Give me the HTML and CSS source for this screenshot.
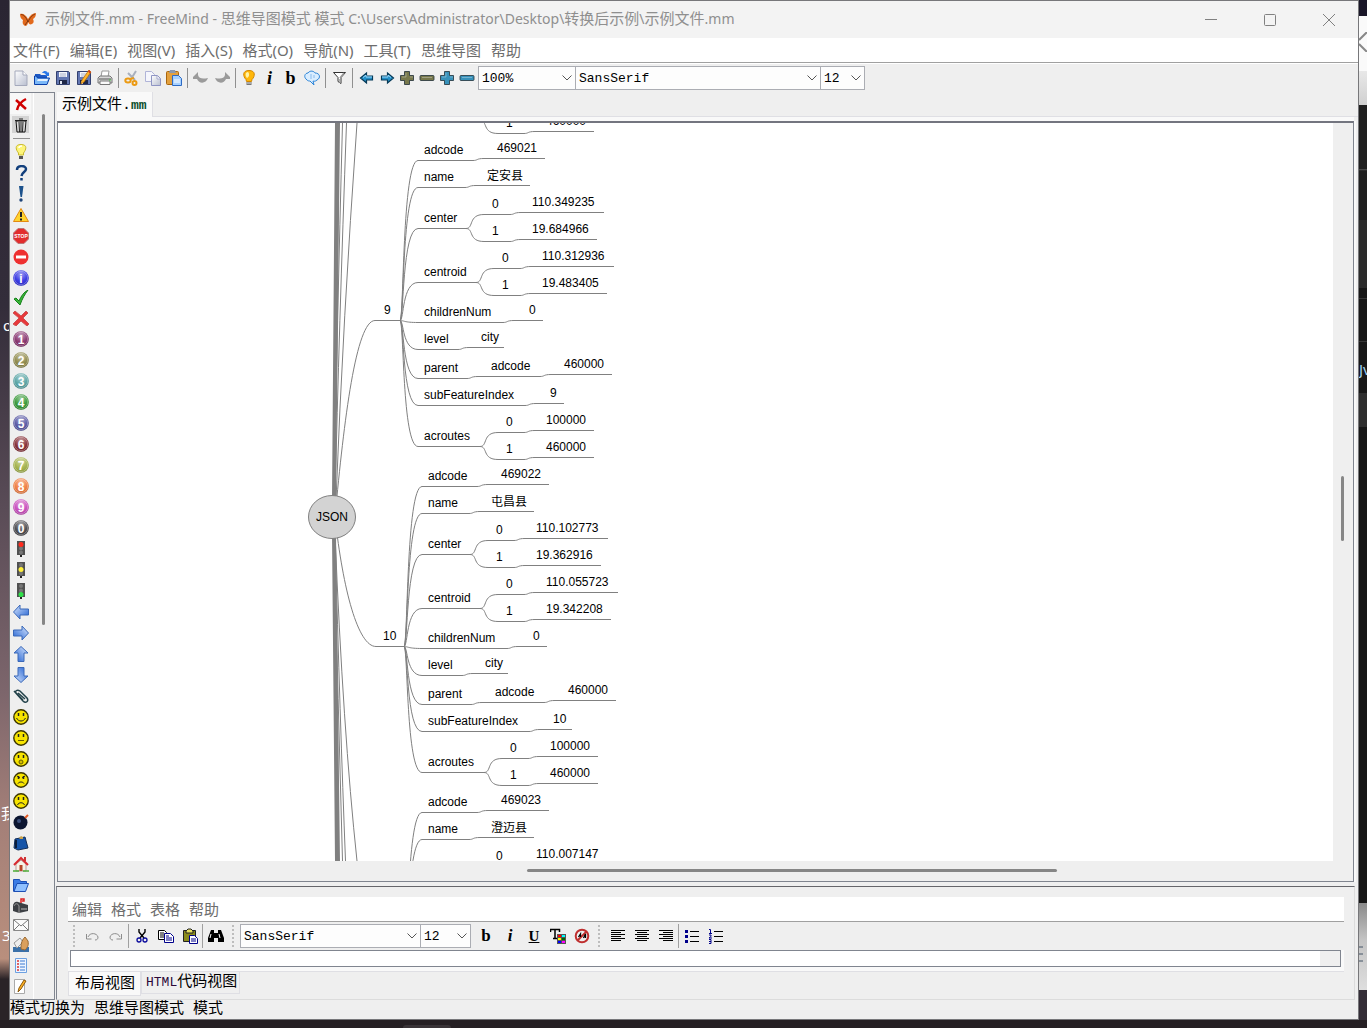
FILE: index.html
```html
<!DOCTYPE html>
<html lang="zh-CN">
<head>
<meta charset="utf-8">
<title>示例文件.mm - FreeMind</title>
<link rel="stylesheet" href="styles.css">
</head>
<body>
<svg class="defs" aria-hidden="true">
  <defs>
    <linearGradient id="gBlue" x1="0" y1="0" x2="1" y2="1"><stop offset="0" stop-color="#dbe9ff"/><stop offset="1" stop-color="#1f5fd0"/></linearGradient>
    <linearGradient id="gGrey" x1="0" y1="0" x2="1" y2="1"><stop offset="0" stop-color="#ffffff"/><stop offset="1" stop-color="#b9bfd0"/></linearGradient>
    <radialGradient id="gShine" cx=".5" cy=".25" r=".75"><stop offset="0" stop-color="#fff" stop-opacity=".55"/><stop offset=".6" stop-color="#fff" stop-opacity=".1"/><stop offset="1" stop-color="#000" stop-opacity=".2"/></radialGradient>
    <symbol id="i-page" viewBox="0 0 16 16"><path d="M2 1h8l4 4v10.500H2z" fill="url(#gGrey)" stroke="#a4a9bb"/><path d="M10 1v4h4" fill="#fff" stroke="#a4a9bb"/></symbol>
    <symbol id="i-open" viewBox="0 0 16 16"><path d="M1 4h5l1 1h6v3H1z" fill="#1c58c4"/><path d="M8 3c2-3 5-2 6 0l1-1v4h-4l1-1c-1-2-2-2-4-2z" fill="#2a79e8"/><path d="M.5 14.500V6h2l1 2h12l-2.500 6.500z" fill="#7bb8f8" stroke="#0a3fa8"/><path d="M4 9h10l-1 2H3z" fill="#e4f2ff"/></symbol>
    <symbol id="i-save" viewBox="0 0 16 16"><path d="M1.500 1.500h12l1 1v12h-13z" fill="#6377b2" stroke="#33406f"/><path d="M4 2h8v5H4z" fill="#f3f5fa"/><path d="M5 4h6M5 6h6" stroke="#aab2cc"/><path d="M4 10h8v4H4z" fill="#1e2747"/><path d="M5 11h2v3H5z" fill="#dfe4f0"/></symbol>
    <symbol id="i-saveas" viewBox="0 0 16 16"><use href="#i-save"/><path d="M13 0l2 2-7 10-3 2 1-4z" fill="#ffb52a" stroke="#b46a00" stroke-width=".7"/><path d="M13 0l2 2-1 1.500-2-2z" fill="#d43a1c"/></symbol>
    <symbol id="i-print" viewBox="0 0 16 16"><path d="M5 1h7l-1 6H4z" fill="#fff" stroke="#999"/><path d="M1 8l2-2h10l2 2v5H1z" fill="#d8d8d8" stroke="#777"/><path d="M3 11h10v3.500H3z" fill="#fafafa" stroke="#777"/><path d="M2 9h12" stroke="#555"/><circle cx="13" cy="10" r=".8" fill="#3c3"/></symbol>
    <symbol id="i-cut" viewBox="0 0 16 16"><path d="M12 1L7 9M4 3l7 7" stroke="#a9b0bd" stroke-width="2"/><g fill="none" stroke="#eb9a13" stroke-width="2"><ellipse cx="4" cy="10.500" rx="2.700" ry="2"/><ellipse cx="10.500" cy="13" rx="2" ry="2"/><path d="M6 9l4-1"/></g></symbol>
    <symbol id="i-copy" viewBox="0 0 16 16"><path d="M.5 1.500h6l3 3v7h-9z" fill="#f5f6fc" stroke="#b0b4d8"/><path d="M6.500 5.500h6l3 3v7h-9z" fill="url(#gGrey)" stroke="#8f95c4"/><path d="M12 6v3h3" fill="#fff" stroke="#a5aacf"/></symbol>
    <symbol id="i-paste" viewBox="0 0 16 16"><rect x=".5" y="1.500" width="12" height="13" rx="1" fill="#e3a03e" stroke="#a8660f"/><path d="M4 0h5l1 3H3z" fill="#8d99ae"/><path d="M6.500 5.500h6l3 3v7h-9z" fill="#a6d0ff" stroke="#2d6ac4"/><path d="M8 10h6M8 12h6" stroke="#fff"/></symbol>
    <symbol id="i-undo" viewBox="0 0 16 16"><path d="M0 7l5-5v3c1 4 5 4 10 3-2 6-9 6-11 1L0 9z" fill="#9b9b9b"/></symbol>
    <symbol id="i-bulb" viewBox="0 0 16 16"><path d="M8 .5c-7 0-6 6-3 9l.5 2h5l.5-2c3-3 4-9-3-9z" fill="#ffb70a" stroke="#d18600"/><path d="M7 2c-3 0-3 4-1 6 2-1 3-4 1-6z" fill="#fff3a6"/><path d="M5.500 12h5v3h-5z" fill="#777"/><path d="M6 13h4" stroke="#ddd"/></symbol>
    <symbol id="i-cloud" viewBox="0 0 16 16"><path d="M3 10C-1 7 1 3 4 3c2-3 6-2 7 0 5 0 6 5 2 7-2 2-4 1-4 1l1 4-4-4c-1 0-2 0-3-1z" fill="#d9edff" stroke="#2b84d8"/><path d="M7 4v5M10 5v3" stroke="#88bbee"/></symbol>
    <symbol id="i-filter" viewBox="0 0 16 16"><path d="M2.500 2.500h12L10 7.500v6L7 11.500V7.500z" fill="#fff" stroke="#333"/><path d="M9 8l4-5M9 9v4" stroke="#999" stroke-width="1.500"/></symbol>
    <symbol id="i-navl" viewBox="0 0 16 16"><path d="M1.500 8l6-5v3h6v4h-6v3z" fill="#2490c8" stroke="#063a58" stroke-width="1.200"/><path d="M4 7.500L7 5v2h6" fill="none" stroke="#9ddcff"/></symbol>
    <symbol id="i-plus" viewBox="0 0 16 16"><path d="M5.500 1.500h5v4h4v5h-4v4h-5v-4h-4v-5h4z" fill="currentColor" stroke="#203038" stroke-opacity=".8"/><path d="M7 3v4H3M11 7h3" fill="none" stroke="#fff" stroke-opacity=".3"/></symbol>
    <symbol id="i-minus" viewBox="0 0 16 16"><rect x="1" y="5.500" width="14" height="5" rx="1" fill="currentColor" stroke="#203038" stroke-opacity=".8"/><path d="M3 7.500h10" stroke="#fff" stroke-opacity=".3"/></symbol>
    <symbol id="i-chev" viewBox="0 0 10 6"><path d="M.5 .5L5 5l4.500-4.500" fill="none" stroke="#555"/></symbol>
    <symbol id="i-ball" viewBox="0 0 16 16"><circle cx="8" cy="8" r="7.800" fill="currentColor"/><circle cx="8" cy="8" r="7.800" fill="url(#gShine)"/><circle cx="8" cy="8" r="6.700" fill="none" stroke="#fff" stroke-opacity=".3"/></symbol>
    <symbol id="i-light" viewBox="0 0 16 16"><path d="M4 0h8v14H4z" fill="#505050"/><path d="M7 14h2v2H7z" fill="#222"/><circle cx="8" cy="3" r="2" fill="#777"/><circle cx="8" cy="7.500" r="2" fill="#777"/><circle cx="8" cy="11.500" r="2" fill="#777"/></symbol>
    <symbol id="i-arrow" viewBox="0 0 16 16"><path d="M.5 8l6.500-7v4h8.500v6H7v4z" fill="url(#gBlue)" stroke="#3a68b8"/></symbol>
    <symbol id="i-face" viewBox="0 0 16 16"><circle cx="8" cy="8" r="7.200" fill="#f7e400" stroke="#3b3500" stroke-width="1.400"/><path d="M5.500 4v3M10.500 4v3" stroke="#222" stroke-width="1.500"/></symbol>
    <symbol id="i-clip" viewBox="0 0 16 16"><path d="M1 3l9 10c3 3 6 0 4-3L7 3C4 1 2 3 3 5l7 7M5 5l7 6" fill="none" stroke="#23424a" stroke-width="1.500"/></symbol>
    <symbol id="i-lines" viewBox="0 0 16 16"><path d="M1 2.500h14M1 4.500h10M1 6.500h14M1 8.500h10M1 10.500h14M1 12.500h10" stroke="#000"/></symbol>

    <g id="branch" fill="none" stroke="#808080">
      <path d="M400 320.500C404 320.500 402 160.500 418 160.500M400 320.500C404 320.500 402 187.500 418 187.500M400 320.500C404 320.500 402 228.500 418 228.500M400 320.500C404 320.500 402 282.500 418 282.500M400 320.500C404 320.500 404 322.500 418 322.500M400 320.500C404 320.500 402 349.500 418 349.500M400 320.500C404 320.500 402 378.500 418 378.500M400 320.500C404 320.500 402 405.500 418 405.500M400 320.500C404 320.500 402 446.500 418 446.500"/>
      <path d="M418 160.500h55C478 160.500 476 158.500 484 158.500H545"/>
      <path d="M418 187.500h47C470 187.500 468 185.500 476 185.500H530"/>
      <path d="M418 228.500h48C474 228.500 468 214.500 484 214.500H510C515 214.500 513 212.500 521 212.500H604M466 228.500C474 228.500 468 241.500 484 241.500H510C515 241.500 513 239.500 521 239.500H597"/>
      <path d="M418 282.500h58C484 282.500 478 268.500 494 268.500H520C525 268.500 523 266.500 531 266.500H614M476 282.500C484 282.500 478 295.500 494 295.500H520C525 295.500 523 293.500 531 293.500H607"/>
      <path d="M418 322.500h85C508 322.500 506 320.500 514 320.500H543"/>
      <path d="M418 349.500h40C463 349.500 461 347.500 469 347.500H504"/>
      <path d="M418 378.500h49C472 378.500 470 376.500 478 376.500H540C545 376.500 543 374.500 551 374.500H612"/>
      <path d="M418 405.500h107C530 405.500 528 403.500 536 403.500H564"/>
      <path d="M418 446.500h62C488 446.500 482 432.500 498 432.500H524C529 432.500 527 430.500 535 430.500H594M480 446.500C488 446.500 482 459.500 498 459.500H524C529 459.500 527 457.500 535 457.500H594"/>
    </g>
  </defs>
</svg>

<div class="desktop">
  <aside class="strip strip-left"><span class="peek peek-a">o</span><span class="peek peek-b">我</span><span class="peek peek-c">3</span></aside>

  <div class="window">
    <header class="titlebar">
      <svg class="logo" viewBox="0 0 16 14"><path d="M8 6C6 2 3 0 0 1c0 3 1 5 3 6-1 3 0 5 2 6 2 0 3-2 3-4 1 2 2 3 4 2 2-1 2-3 1-5 2-1 3-3 3-6-3 0-6 2-8 6z" fill="#e2691c"/><path d="M1 1.500c2 0 5 2 7 7.500 2-5 5-7 7-8M5 12l3-4" fill="none" stroke="#7b3612"/></svg>
      <h1>示例文件<span>.mm - FreeMind - </span>思维导图模式 模式<span> C:\Users\Administrator\Desktop\</span>转换后示例<span>\</span>示例文件<span>.mm</span></h1>
      <div class="controls">
        <button aria-label="最小化"><svg viewBox="0 0 12 12"><path d="M0 5.500h12"/></svg></button>
        <button aria-label="最大化"><svg viewBox="0 0 12 12"><rect x=".5" y=".5" width="11" height="11" rx="1"/></svg></button>
        <button aria-label="关闭"><svg viewBox="0 0 12 12"><path d="M0 0l12 12M12 0L0 12"/></svg></button>
      </div>
    </header>

    <nav class="menubar">
      <button>文件(F)</button><button>编辑(E)</button><button>视图(V)</button><button>插入(S)</button><button>格式(O)</button><button>导航(N)</button><button>工具(T)</button><button>思维导图</button><button>帮助</button>
    </nav>

    <div class="toolbar">
      <button aria-label="新建"><svg><use href="#i-page"/></svg></button>
      <button aria-label="打开"><svg><use href="#i-open"/></svg></button>
      <button aria-label="保存"><svg><use href="#i-save"/></svg></button>
      <button aria-label="另存为"><svg><use href="#i-saveas"/></svg></button>
      <button aria-label="打印"><svg><use href="#i-print"/></svg></button>
      <i class="sep"></i>
      <button aria-label="剪切"><svg><use href="#i-cut"/></svg></button>
      <button aria-label="复制"><svg><use href="#i-copy"/></svg></button>
      <button aria-label="粘贴"><svg><use href="#i-paste"/></svg></button>
      <i class="sep"></i>
      <button aria-label="撤消"><svg><use href="#i-undo"/></svg></button>
      <button aria-label="重做"><svg class="flip"><use href="#i-undo"/></svg></button>
      <i class="sep"></i>
      <button aria-label="图标"><svg><use href="#i-bulb"/></svg></button>
      <button class="glyph italic">i</button>
      <button class="glyph">b</button>
      <button aria-label="云"><svg><use href="#i-cloud"/></svg></button>
      <i class="sep"></i>
      <button aria-label="过滤"><svg><use href="#i-filter"/></svg></button>
      <i class="sep wide"></i>
      <button class="slim" aria-label="后退"><svg><use href="#i-navl"/></svg></button>
      <button class="slim" aria-label="前进"><svg class="flip"><use href="#i-navl"/></svg></button>
      <button class="slim olive" aria-label="展开"><svg><use href="#i-plus"/></svg></button>
      <button class="slim olive" aria-label="折叠"><svg><use href="#i-minus"/></svg></button>
      <button class="slim teal" aria-label="放大"><svg><use href="#i-plus"/></svg></button>
      <button class="slim teal" aria-label="缩小"><svg><use href="#i-minus"/></svg></button>
      <span class="combo w-zoom"><select aria-label="缩放"><option>100%</option></select><svg><use href="#i-chev"/></svg></span>
      <span class="combo w-font"><select aria-label="字体"><option>SansSerif</option></select><svg><use href="#i-chev"/></svg></span>
      <span class="combo w-size"><select aria-label="字号"><option>12</option></select><svg><use href="#i-chev"/></svg></span>
    </div>

    <div class="workspace">
      <aside class="palette">
        <div class="icons">
          <button class="light" aria-label="删除"><svg viewBox="0 0 16 16"><path d="M3 4l10 9M13 3C9 5 5 9 4 14" fill="none" stroke="#d00000" stroke-width="2.500"/></svg></button>
          <button class="pressed" aria-label="全部删除"><svg viewBox="0 0 16 16"><path d="M3 4h10l-1 11H4z" fill="#ddd" stroke="#111"/><path d="M2 3.500h12M6 2h4M6 5l.5 10M10 5l-.5 10M8 5v10" stroke="#222" fill="none"/></svg></button>
          <hr>
          <button aria-label="想法"><svg viewBox="0 0 16 16"><path d="M8 .5C1 .5 3 6 5.500 9v2h5V9C13 6 15 .5 8 .5z" fill="#fdf57a" stroke="#c9b92c"/><path d="M6 12h4v3H6z" fill="#555"/><path d="M6 4c0-2 2-2 3-2" stroke="#fff" fill="none" stroke-width="1.500"/></svg></button>
          <button aria-label="问题"><svg viewBox="0 0 16 16"><path d="M4 5c0-5 9-5 9-1 0 3-4 3-4.500 7M8.500 13v2.500" fill="none" stroke="#123f7c" stroke-width="2.500"/></svg></button>
          <button aria-label="重要"><svg viewBox="0 0 16 16"><path d="M6 0h4.500L9 11H7.500z" fill="#1c528c"/><circle cx="8" cy="14" r="1.700" fill="#1c4378"/></svg></button>
          <button aria-label="警告"><svg viewBox="0 0 16 16"><path d="M8 1.500l7.500 13H.5z" fill="#ffd42e" stroke="#e28a12"/><path d="M8 5v5M8 11.500v2" stroke="#222" stroke-width="2"/></svg></button>
          <button aria-label="停止"><svg viewBox="0 0 16 16"><path d="M5 .5h6l4.500 4.500v6L11 15.500H5L.5 11V5z" fill="#e22c2c" stroke="#bb7777"/><text x="8" y="10" class="tiny">STOP</text></svg></button>
          <button aria-label="禁止"><svg viewBox="0 0 16 16"><circle cx="8" cy="8" r="7.500" fill="#ee3030"/><path d="M3 8h10" stroke="#fff" stroke-width="3"/></svg></button>
          <button class="c-info"><svg viewBox="0 0 16 16"><use href="#i-ball"/><text x="8" y="12.500" class="digit">i</text></svg></button>
          <button class="low" aria-label="完成"><svg viewBox="0 0 16 16"><path d="M1 9l2-1 3 3c2-5 5-9 9-11-3 4-6 9-8 15z" fill="#39b538" stroke="#148018"/></svg></button>
          <button aria-label="取消"><svg viewBox="0 0 16 16"><path d="M2 1l6 5 5-5 2 2-5 5 6 6-2 2-6-5-5 5-3-2 6-6-6-5z" fill="#e8383b" stroke="#c55"/></svg></button>
          <button class="c1"><svg viewBox="0 0 16 16"><use href="#i-ball"/><text x="8" y="12.500" class="digit">1</text></svg></button>
          <button class="c2"><svg viewBox="0 0 16 16"><use href="#i-ball"/><text x="8" y="12.500" class="digit">2</text></svg></button>
          <button class="c3"><svg viewBox="0 0 16 16"><use href="#i-ball"/><text x="8" y="12.500" class="digit">3</text></svg></button>
          <button class="c4"><svg viewBox="0 0 16 16"><use href="#i-ball"/><text x="8" y="12.500" class="digit">4</text></svg></button>
          <button class="c5"><svg viewBox="0 0 16 16"><use href="#i-ball"/><text x="8" y="12.500" class="digit">5</text></svg></button>
          <button class="c6"><svg viewBox="0 0 16 16"><use href="#i-ball"/><text x="8" y="12.500" class="digit">6</text></svg></button>
          <button class="c7"><svg viewBox="0 0 16 16"><use href="#i-ball"/><text x="8" y="12.500" class="digit">7</text></svg></button>
          <button class="c8"><svg viewBox="0 0 16 16"><use href="#i-ball"/><text x="8" y="12.500" class="digit">8</text></svg></button>
          <button class="c9"><svg viewBox="0 0 16 16"><use href="#i-ball"/><text x="8" y="12.500" class="digit">9</text></svg></button>
          <button class="c0"><svg viewBox="0 0 16 16"><use href="#i-ball"/><text x="8" y="12.500" class="digit">0</text></svg></button>
          <button aria-label="红灯"><svg viewBox="0 0 16 16"><use href="#i-light"/><circle cx="8" cy="3.500" r="2.500" fill="#ff2a1c"/></svg></button>
          <button aria-label="黄灯"><svg viewBox="0 0 16 16"><use href="#i-light"/><circle cx="8" cy="7.500" r="2.500" fill="#fff03a"/></svg></button>
          <button aria-label="绿灯"><svg viewBox="0 0 16 16"><use href="#i-light"/><circle cx="8" cy="11.500" r="2.500" fill="#2fe04a"/></svg></button>
          <button aria-label="向左"><svg><use href="#i-arrow"/></svg></button>
          <button aria-label="向右"><svg class="flip"><use href="#i-arrow"/></svg></button>
          <button aria-label="向上"><svg class="up"><use href="#i-arrow"/></svg></button>
          <button aria-label="向下"><svg class="down"><use href="#i-arrow"/></svg></button>
          <button aria-label="附件"><svg><use href="#i-clip"/></svg></button>
          <button aria-label="高兴"><svg viewBox="0 0 16 16"><use href="#i-face"/><path d="M3.500 9c2 4 7 4 9 0" fill="none" stroke="#222"/></svg></button>
          <button aria-label="平静"><svg viewBox="0 0 16 16"><use href="#i-face"/><path d="M5 10.500h6" stroke="#665c00"/></svg></button>
          <button aria-label="惊讶"><svg viewBox="0 0 16 16"><use href="#i-face"/><circle cx="8" cy="11" r="2" fill="#d4be00" stroke="#665c00"/></svg></button>
          <button aria-label="生气"><svg viewBox="0 0 16 16"><use href="#i-face"/><path d="M4 4l3 2M12 4L9 6M5 11.500c1-2 5-2 6 0" fill="none" stroke="#222"/></svg></button>
          <button aria-label="难过"><svg viewBox="0 0 16 16"><use href="#i-face"/><path d="M4.500 12c1-3 6-3 7 0" fill="none" stroke="#222"/></svg></button>
          <button aria-label="炸弹"><svg viewBox="0 0 16 16"><circle cx="7.500" cy="8.500" r="7" fill="#0b1530"/><circle cx="6" cy="7" r="2" fill="#3b4f7c"/><path d="M12 4l3-3" stroke="#e25822" stroke-width="2"/></svg></button>
          <button aria-label="桌面"><svg viewBox="0 0 16 16"><path d="M2 4l10-2 3 11-10 2-4-2z" fill="#1554a8" stroke="#132e57"/><path d="M6 3l2-2 2 1v2H7z" fill="#c8a24a"/><path d="M3 5v8" stroke="#0a1c3a" stroke-width="2"/></svg></button>
          <button aria-label="主页"><svg viewBox="0 0 16 16"><path d="M3 8l5-4 5 4v7H3z" fill="#f7f2e6" stroke="#b99"/><path d="M1 9l7-7 7 7" fill="none" stroke="#d8282e" stroke-width="2"/><path d="M11 1h2v4h-2z" fill="#c33"/><path d="M6.500 9h3v6h-3z" fill="#b5462a"/><path d="M0 15h6M10 15h6" stroke="#4fae3a" stroke-width="1.500"/></svg></button>
          <button aria-label="文件夹"><svg viewBox="0 0 16 16"><path d="M.5 14.500v-12h6l1 2h6v3" fill="#3c7de6" stroke="#1c4fb4"/><path d="M1 14.500l3-8h11.500l-3 8z" fill="#8fc0ff" stroke="#1c4fb4"/></svg></button>
          <button aria-label="邮箱"><svg viewBox="0 0 16 16"><path d="M0 13V7c1-3 3-4 5-3l10 3v6l-9 2z" fill="#3c3f44"/><path d="M6 15V8c-1-3-4-3-5 0" fill="none" stroke="#999"/><path d="M8 5V1h3v2H9" fill="none" stroke="#d22" stroke-width="1.500"/><path d="M8 11h6" stroke="#bbb"/></svg></button>
          <button class="lower" aria-label="邮件"><svg viewBox="0 0 16 16"><path d="M.5 2.500h15v11H.5z" fill="#fafafa" stroke="#888"/><path d="M1 3l7 6 7-6M1 13l5-5M15 13l-5-5" fill="none" stroke="#777"/></svg></button>
          <button aria-label="寄信"><svg viewBox="0 0 16 16"><path d="M0 11h16v5H0z" fill="#3a70a8"/><path d="M1 7l6-5 3 4-6 6z" fill="#eee" stroke="#999"/><path d="M8 13c0-4 0-8 4-12l3 4c1 5-1 7-3 9z" fill="#dba05c" stroke="#9a6a33"/></svg></button>
          <button aria-label="列表"><svg viewBox="0 0 16 16"><path d="M2.500 1.500h11v14h-11z" fill="#eef5ff" stroke="#6da0e0"/><path d="M4 4h2M4 7h2M4 10h2M4 13h2" stroke="#d33" stroke-width="1.500"/><path d="M7 4h5M7 7h5M7 10h5M7 13h5" stroke="#3b78d0"/></svg></button>
          <button aria-label="编辑"><svg viewBox="0 0 16 16"><path d="M1.500 1.500h10v14h-10z" fill="#fff" stroke="#aaa"/><path d="M11 2l2 1-5 8-3 3 1-4z" fill="#ffb020" stroke="#8a5a10"/></svg></button>
        </div>
        <div class="rail"><i class="thumb"></i></div>
      </aside>

      <div class="stage">
        <div class="tabs"><button class="tab">示例文件.<b>mm</b></button></div>
        <main class="mapframe">
          <div class="canvas">
            <svg class="map" viewBox="58 123 1275 738">
              <path d="M335 123h5L336 500h-4zM332 534h4l4 327h-5z" fill="#808080"/>
              <g fill="none" stroke="#808080">
                <path d="M357 123Q343 320 336 500M346.500 123Q339 330 335 500M342.500 123Q337 330 334 500"/>
                <path d="M334 534Q338 700 342.500 861M335 534Q340 720 345.500 861M335 534Q343 730 357 861"/>
                <path d="M335 517C344 420 356 320.500 375 320.500H400"/>
                <path d="M335 517C343 590 358 646.500 376 646.500H404"/>
              </g>
              <use href="#branch" y="-326"/><use href="#branch"/><use href="#branch" x="4" y="326"/><use href="#branch" x="4" y="652"/>
              <path d="M567 729.500h5" stroke="#808080"/>
              <ellipse cx="332" cy="517" rx="23.500" ry="21.500" fill="#d3d3d3" stroke="#808080"/>
              <text x="316" y="521">JSON</text>
              <g><text x="506" y="127">1</text><text x="546" y="125">460000</text></g>
              <g>
                <text x="384" y="314">9</text>
                <text x="424" y="154">adcode</text><text x="497" y="152">469021</text>
                <text x="424" y="181">name</text><text x="487" y="180">定安县</text>
                <text x="424" y="222">center</text><text x="492" y="208">0</text><text x="532" y="206">110.349235</text><text x="492" y="235">1</text><text x="532" y="233">19.684966</text>
                <text x="424" y="276">centroid</text><text x="502" y="262">0</text><text x="542" y="260">110.312936</text><text x="502" y="289">1</text><text x="542" y="287">19.483405</text>
                <text x="424" y="316">childrenNum</text><text x="529" y="314">0</text>
                <text x="424" y="343">level</text><text x="481" y="341">city</text>
                <text x="424" y="372">parent</text><text x="491" y="370">adcode</text><text x="564" y="368">460000</text>
                <text x="424" y="399">subFeatureIndex</text><text x="550" y="397">9</text>
                <text x="424" y="440">acroutes</text><text x="506" y="426">0</text><text x="546" y="424">100000</text><text x="506" y="453">1</text><text x="546" y="451">460000</text>
              </g>
              <g>
                <text x="383" y="640">10</text>
                <text x="428" y="480">adcode</text><text x="501" y="478">469022</text>
                <text x="428" y="507">name</text><text x="491" y="506">屯昌县</text>
                <text x="428" y="548">center</text><text x="496" y="534">0</text><text x="536" y="532">110.102773</text><text x="496" y="561">1</text><text x="536" y="559">19.362916</text>
                <text x="428" y="602">centroid</text><text x="506" y="588">0</text><text x="546" y="586">110.055723</text><text x="506" y="615">1</text><text x="546" y="613">19.342208</text>
                <text x="428" y="642">childrenNum</text><text x="533" y="640">0</text>
                <text x="428" y="669">level</text><text x="485" y="667">city</text>
                <text x="428" y="698">parent</text><text x="495" y="696">adcode</text><text x="568" y="694">460000</text>
                <text x="428" y="725">subFeatureIndex</text><text x="553" y="723">10</text>
                <text x="428" y="766">acroutes</text><text x="510" y="752">0</text><text x="550" y="750">100000</text><text x="510" y="779">1</text><text x="550" y="777">460000</text>
              </g>
              <g>
                <text x="428" y="806">adcode</text><text x="501" y="804">469023</text>
                <text x="428" y="833">name</text><text x="491" y="832">澄迈县</text>
                <text x="496" y="860">0</text><text x="536" y="858">110.007147</text>
              </g>
            </svg>
          </div>
          <div class="vbar"><i class="thumb"></i></div>
          <div class="hbar"><i class="thumb"></i></div>
        </main>

        <section class="notes">
          <nav class="menubar small"><button>编辑</button><button>格式</button><button>表格</button><button>帮助</button></nav>
          <div class="notebar">
            <i class="grip"></i>
            <button aria-label="撤消"><svg viewBox="0 0 16 16"><path d="M4 9c2-5 9-4 10 0 0 2-1 3-3 3M2.500 6v5h5" fill="none" stroke="#8c8c8c"/></svg></button>
            <button aria-label="重做"><svg class="flip" viewBox="0 0 16 16"><path d="M4 9c2-5 9-4 10 0 0 2-1 3-3 3M2.500 6v5h5" fill="none" stroke="#8c8c8c"/></svg></button>
            <i class="rule"></i>
            <button aria-label="剪切"><svg viewBox="0 0 16 16"><path d="M5 1v3l5 6M11 1v3L6 10" fill="none" stroke="#000" stroke-width="1.400"/><g fill="none" stroke="#0a0a9c" stroke-width="1.300"><circle cx="5" cy="12" r="2"/><circle cx="11" cy="12" r="2"/></g></svg></button>
            <button aria-label="复制"><svg viewBox="0 0 16 16"><path d="M.5 2.500h6l2 2v7h-8z" fill="#fff" stroke="#000"/><path d="M2 5h4M2 7h4M2 9h4" stroke="#000"/><path d="M6.500 5.500h6l3 3v6h-9z" fill="#fff" stroke="#00008b"/><path d="M8 8h3M8 10h6M8 12h6" stroke="#00008b"/></svg></button>
            <button aria-label="粘贴"><svg viewBox="0 0 16 16"><path d="M1.500 2.500h12v11h-12z" fill="#8b8b1a" stroke="#222"/><path d="M4 3l2-2h3l2 2v2H4z" fill="#e8e060" stroke="#222"/><path d="M7.500 7.500h5l3 3v5h-8z" fill="#fff" stroke="#00008b"/><path d="M9 11h5M9 13h5" stroke="#00008b"/></svg></button>
            <i class="rule"></i>
            <button aria-label="查找"><svg viewBox="0 0 16 16"><path d="M3 2h3v3h4V2h3l3 8v4h-6v-4H6v4H0v-4z" fill="#000"/><path d="M3 6l-1 4M11 6l1 4" stroke="#fff"/></svg></button>
            <i class="grip mid"></i>
            <span class="combo w-nfont"><select aria-label="字体"><option>SansSerif</option></select><svg><use href="#i-chev"/></svg></span>
            <span class="combo w-nsize"><select aria-label="字号"><option>12</option></select><svg><use href="#i-chev"/></svg></span>
            <button class="glyph first">b</button>
            <button class="glyph italic">i</button>
            <button class="glyph under">U</button>
            <button aria-label="颜色"><svg viewBox="0 0 16 16"><path d="M.5 4V1.500h9V4M5 1.500v9M3 10.500h4" fill="none" stroke="#000" stroke-width="1.500"/><path d="M7 6h9v10H7z" fill="#555"/><path d="M8 7h3v2H8z" fill="red"/><path d="M12 7h3v2h-3z" fill="#0ff"/><path d="M8 10h3v2H8z" fill="#ff0"/><path d="M12 10h3v2h-3z" fill="#060"/><path d="M8 13h3v2H8z" fill="#00f"/><path d="M12 13h3v2h-3z" fill="#f0f"/></svg></button>
            <button aria-label="清除"><svg viewBox="0 0 16 16"><circle cx="8" cy="8" r="6.300" fill="none" stroke="#bf2f2f" stroke-width="2"/><path d="M3.500 12.500l9-9" stroke="#bf2f2f" stroke-width="2"/><path d="M4.500 9l2-3v3M9.500 10l2-4v4" fill="none" stroke="#000" stroke-width="1.300"/></svg></button>
            <i class="grip mid"></i>
            <button aria-label="左对齐"><svg><use href="#i-lines"/></svg></button>
            <button aria-label="居中"><svg viewBox="0 0 16 16"><path d="M1 2.500h14M3 4.500h10M1 6.500h14M3 8.500h10M1 10.500h14M3 12.500h10" stroke="#000"/></svg></button>
            <button aria-label="右对齐"><svg class="flip"><use href="#i-lines"/></svg></button>
            <i class="rule"></i>
            <button aria-label="项目符号"><svg viewBox="0 0 16 16"><path d="M1 2h3v3H1zM1 7h3v3H1zM1 12h3v3H1z" fill="#00008b"/><path d="M6 3.500h9M6 8.500h9M6 13.500h9" stroke="#000"/></svg></button>
            <button aria-label="编号"><svg viewBox="0 0 16 16"><path d="M1 1.500h1.500V5M1 5.500h3M1 7h2v1.500L1 10h3M1 11.500h2v4H1M1 13.500h2" fill="none" stroke="#00008b"/><path d="M6 3.500h9M6 8.500h9M6 13.500h9" stroke="#000"/></svg></button>
          </div>
          <div class="editbox"><div class="editor"><textarea aria-label="备注"></textarea></div></div>
          <div class="viewtabs"><button class="on">布局视图</button><button><span class="latin">HTML</span>代码视图</button></div>
        </section>
      </div>
    </div>
    <footer class="status">模式切换为 思维导图模式 模式</footer>
  </div>

  <aside class="strip strip-right">
    <svg class="back" viewBox="0 0 8 20"><path d="M8 0L0 8M0 12l8 8" stroke="#888" stroke-width="2" fill="none"/></svg>
    <span class="peek peek-d">Jv</span>
    <svg class="burger" viewBox="0 0 4 16"><path d="M0 1h4M0 8h4M0 15h4" stroke="#456"/></svg>
  </aside>
  <div class="taskbar"><i class="pill"></i></div>
</div>
</body>
</html>
```
FILE: styles.css
```css
* { box-sizing: border-box; }
:root {
  --face: #efefef;
  --edge: #80858f;
  --ui: "Noto Sans", "Noto Sans CJK SC", sans-serif;
  --mono: "Liberation Mono", "Noto Sans CJK SC", monospace;
}
body { margin: 0; background: #262024; overflow: hidden; }
button { border: 0; padding: 0; background: none; font: inherit; color: inherit; }
svg { display: block; }
.defs { position: absolute; width: 0; height: 0; }
.flip { transform: scaleX(-1); }
.up { transform: rotate(90deg); }
.down { transform: rotate(-90deg); }

.desktop {
  display: grid;
  grid-template-columns: 9px minmax(0, 1fr) 8px;
  grid-template-rows: minmax(0, 1fr) 8px;
  height: 100vh;
}
.strip { position: relative; overflow: hidden; }
.strip-left { background: linear-gradient(#2a2532 0%, #332d3a 30%, #5a4c57 50%, #7d666c 68%, #a37f78 80%, #b98f7d 94%, #2a2327 96%); }
.strip-right {
  background: linear-gradient(#1a1728 16px, #fafafa 16px, #fafafa 71px, #e8e8e8 71px, #d0d0d0 105px, #1f1f1f 105px, #1f1f1f 169px, #555 169px, #1f1f1f 171px, #1f1f1f 220px, #2b2b2b 220px, #2b2b2b 288px, #171717 288px, #171717 298px, #555 298px, #171717 299px, #171717 341px, #555 341px, #171717 342px, #171717 393px, #2e2e2e 393px, #2e2e2e 427px, #161616 427px, #161616 903px, #8a8a8a 903px, #c4c4c4 940px, #dedede 990px, #342e37 990px);
}
.peek { position: absolute; font: 15px/16px var(--ui); color: #fff; }
.peek-a { top: 317px; left: 3px; }
.peek-b { top: 805px; left: 1px; }
.peek-c { top: 927px; left: 2px; }
.peek-d { top: 361px; left: 0; color: #9fd0f0; }
.back { position: absolute; top: 32px; left: 0; width: 8px; height: 20px; }
.burger { position: absolute; top: 946px; left: 0; width: 4px; height: 16px; }
.taskbar { grid-column: 1 / -1; background: #262024; padding: 5px 0 0 403px; }
.pill { display: block; width: 48px; height: 3px; border-radius: 3px 3px 0 0; background: #3a3438; }

.window {
  display: flex;
  flex-direction: column;
  min-width: 0;
  border: 1px solid #77777a;
  background: var(--face);
}
.titlebar { display: flex; align-items: center; height: 37px; padding-left: 10px; background: #f3f3f3; }
.logo { width: 16px; height: 14px; }
.titlebar h1 { flex: 1; margin: 0 0 2px 9px; font: 15px/20px var(--ui); color: #8f8f8f; white-space: nowrap; }
.titlebar h1 span { font-size: 14px; }
.controls { display: flex; }
.controls button { display: grid; place-items: center; width: 59px; height: 37px; }
.controls svg { width: 12px; height: 12px; fill: none; stroke: #808080; }

.menubar {
  display: flex;
  gap: 10px;
  height: 25px;
  padding-left: 3px;
  border-bottom: 1px solid #a0a0a0;
  background: #fff;
  font: 15px/24px var(--ui);
  color: #6d6d6d;
}
.small { gap: 9px; padding-left: 4px; }
.toolbar { display: flex; align-items: center; height: 29px; flex: none; border-top: 1px solid #fff; }
.toolbar button { display: grid; place-items: center; width: 21px; height: 24px; }
.toolbar .slim { width: 20px; }
.toolbar button svg, .notebar button svg, .icons svg { width: 16px; height: 16px; }
.olive { color: #77784c; }
.teal { color: #3791ba; }
.sep { width: 6px; height: 20px; background: linear-gradient(90deg, transparent 3px, #909090 3px, #909090 4px, transparent 4px); }
.wide { width: 8px; }
.glyph { font: bold 18px/20px "Liberation Serif", serif; color: #000; }
.italic { font-style: italic; }

.combo { position: relative; height: 24px; }
.combo select {
  display: block;
  width: 100%;
  height: 100%;
  padding: 2px 0 0 3px;
  border: 1px solid #abadb3;
  border-radius: 0;
  background: #fdfdfd;
  appearance: none;
  font: 13px/20px var(--mono);
  color: #000;
}
.combo svg { position: absolute; right: 4px; top: 9px; width: 10px; height: 6px; }
.w-zoom { width: 98px; margin-left: 1px; }
.w-font { width: 246px; margin-left: -1px; }
.w-size { width: 45px; margin-left: -1px; }

.workspace { display: flex; flex: 1; min-height: 0; }
.palette {
  display: flex;
  width: 45px;
  flex: none;
  border: solid var(--edge);
  border-width: 1px 1px 1px 0;
  overflow: hidden;
}
.icons { width: 24px; border-right: 1px solid #fff; flex: none; }
.icons button { display: grid; place-items: center; width: 21px; height: 21px; }
.icons .low { height: 19px; }
.icons .lower { height: 17px; }
.icons .light { background: #f8f8f8; }
.icons .pressed { background: #d3d3d3; background-clip: content-box; padding: 2px; }
.icons hr { margin: 3px 3px 2px 3px; border: 0; height: 1px; background: #909090; }
.digit { font: bold 12px "Liberation Sans", sans-serif; fill: #fff; text-anchor: middle; }
.tiny { font: bold 5px "Liberation Sans", sans-serif; fill: #fff; text-anchor: middle; }
.c-info { color: #2626e0; } .c1 { color: #7d2363; } .c2 { color: #85803c; } .c3 { color: #4b9d9d; }
.c4 { color: #279027; } .c5 { color: #4b4b9d; } .c6 { color: #7b1c24; } .c7 { color: #9bac3c; }
.c8 { color: #ef7230; } .c9 { color: #c440b8; } .c0 { color: #3c3c40; }
.rail { flex: 1; padding: 21px 0 0 8px; }
.thumb { display: block; border-radius: 2px; background: #868686; }
.rail .thumb { width: 3px; height: 511px; }

.stage { display: flex; flex: 1; flex-direction: column; min-width: 0; padding-left: 2px; }
.tabs { height: 25px; border-bottom: 1px solid #dfdfe4; flex: none; }
.tab {
  height: 25px;
  padding: 2px 5px 0 5px;
  border-right: 1px solid #dfdfe4;
  background: #f9f9f9;
  font: 15px/22px var(--mono);
}
.tab b { font-size: 13px; color: #0b4f2c; }
.mapframe {
  display: grid;
  flex: 1;
  grid-template-columns: minmax(0, 1fr) 20px;
  grid-template-rows: minmax(0, 1fr) 20px;
  min-height: 0;
  margin: 4px 4px 0 0;
  border: 1px solid var(--edge);
  border-top: 2px solid #73757f;
  box-shadow: 0 -4px #f9f9f9, 2px 0 #f9f9f9;
}
.canvas { overflow: hidden; background: #fff; }
.map { width: 1275px; height: 738px; }
.map text { font: 12px "Liberation Sans", "Noto Sans CJK SC", sans-serif; fill: #000; }
.vbar { padding: 353px 0 0 8px; }
.vbar .thumb { width: 3px; height: 65px; }
.hbar { padding: 8px 0 0 469px; }
.hbar .thumb { width: 530px; height: 3px; }

.notes {
  display: flex;
  flex-direction: column;
  flex: none;
  margin: 4px 3px 0 -1px;
  padding: 10px 10px 2px 11px;
  border: 1px solid #dcdcdc;
  border-top-color: #66666b;
  border-left-color: var(--edge);
}
.notebar { display: flex; align-items: center; height: 28px; padding-left: 1px; }
.notebar button { display: grid; place-items: center; width: 24px; height: 24px; }
.notebar .glyph { font-size: 17px; }
.notebar .under { font-size: 15px; text-decoration: underline; }
.notebar .first { margin-left: 3px; }
.grip { width: 11px; height: 22px; background: repeating-linear-gradient(#bdbdbd 0 2px, transparent 2px 4px) 4px 0 / 2px 100% no-repeat; }
.mid { width: 12px; }
.rule { width: 2px; height: 24px; border-left: 1px solid #a0a0a0; }
.w-nfont { width: 181px; }
.w-nsize { width: 51px; margin-left: -1px; }
.editbox { padding: 0 3px 4px 2px; border-bottom: 1px solid #dfdfe4; background: #f9f9f9; }
.editor { height: 17px; padding-right: 20px; border: 1px solid var(--edge); background: var(--face); }
.editor textarea { display: block; width: 100%; height: 15px; padding: 0; border: 0; resize: none; background: #fff; }
.viewtabs { display: flex; align-items: flex-start; height: 25px; font: 15px/20px var(--mono); }
.viewtabs button { height: 22px; padding: 0 2px 0 4px; border: 1px solid #dfdfe4; border-top: 0; }
.viewtabs .on { height: 24px; padding: 2px 5px 0 6px; background: #f9f9f9; }
.latin { font-size: 13px; color: #2c0838; }
.status { height: 19px; flex: none; font: 15px/20px var(--mono); white-space: pre; }
.status { word-break: keep-all; }
```
